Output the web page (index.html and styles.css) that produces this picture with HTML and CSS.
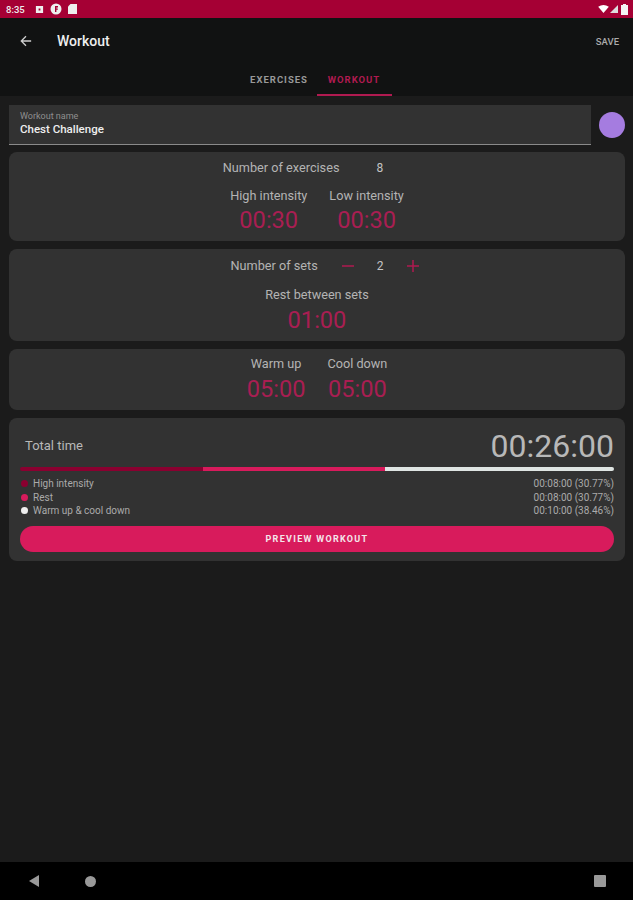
FILE: index.html
```html
<!DOCTYPE html>
<html>

<head>
    <link rel="stylesheet" href="styles.css">
</head>

<body>
    <div class="screen">
        <div class="status-bar">
            <div class="status-left">
                <span class="clock">8:35</span>
                <svg class="notif-box" width="9" height="9" viewBox="0 0 10 10"><path fill="#eee" fill-rule="evenodd" d="M1 1h8v8H1z M4 4v2h2V4z"/></svg>
                <svg class="notif-f" width="12" height="12" viewBox="0 0 12 12"><circle cx="6" cy="6" r="5.500" fill="#eee"/><path fill="#a50034" d="M5 3h3v1.400H6.400v1h1.400v1.400H6.400V9H5z"/></svg>
                <svg class="notif-card" width="9" height="10" viewBox="0 0 9 10"><path fill="#eee" d="M2.500 0H9v10H0V2.500z"/></svg>
            </div>
            <div class="status-right">
                <svg width="11" height="8" viewBox="0 0 12 9"><path fill="#fff" d="M0 2Q6-2 12 2L6 9z"/></svg>
                <svg width="8" height="8" viewBox="0 0 9 9"><path fill="#ddd" d="M9 0V9H0z"/></svg>
                <svg class="battery" width="7" height="11" viewBox="0 0 7 11"><path fill="#f4f4f4" d="M2 0h3v1h2v10H0V1h2z"/></svg>
            </div>
        </div>

        <div class="app-bar">
            <div class="toolbar">
                <svg class="back" width="12" height="12" viewBox="0 0 14 14"><path fill="none" stroke="#cfcfcf" stroke-width="1.500" d="M13 7H2 M7 1.500 1.500 7 7 12.500"/></svg>
                <span class="toolbar-title">Workout</span>
                <span class="save">SAVE</span>
            </div>
            <div class="tabs">
                <div class="tab">EXERCISES</div>
                <div class="tab tab-active">WORKOUT</div>
            </div>
        </div>

        <div class="content">
            <div class="name-row">
                <div class="name-field">
                    <div class="name-label">Workout name</div>
                    <div class="name-value">Chest Challenge</div>
                </div>
                <div class="color-dot"></div>
            </div>

            <div class="card card-intervals">
                <div class="line">
                    <span class="label">Number of exercises</span>
                    <span class="count count-exercises">8</span>
                </div>
                <div class="timers">
                    <div class="timer">
                        <div class="label">High intensity</div>
                        <div class="time">00:30</div>
                    </div>
                    <div class="timer">
                        <div class="label">Low intensity</div>
                        <div class="time">00:30</div>
                    </div>
                </div>
            </div>

            <div class="card card-sets">
                <div class="line line-sets">
                    <span class="label">Number of sets</span>
                    <svg class="stepper-minus" width="14" height="14" viewBox="0 0 14 14"><path stroke="#b01a50" stroke-width="1.500" d="M1 7h12"/></svg>
                    <span class="count count-sets">2</span>
                    <svg width="14" height="14" viewBox="0 0 14 14"><path stroke="#b01a50" stroke-width="1.500" d="M1 7h12 M7 1v12"/></svg>
                </div>
                <div class="timers">
                    <div class="timer">
                        <div class="label">Rest between sets</div>
                        <div class="time">01:00</div>
                    </div>
                </div>
            </div>

            <div class="card card-warm">
                <div class="timers">
                    <div class="timer">
                        <div class="label">Warm up</div>
                        <div class="time">05:00</div>
                    </div>
                    <div class="timer">
                        <div class="label">Cool down</div>
                        <div class="time">05:00</div>
                    </div>
                </div>
            </div>

            <div class="card card-total">
                <div class="total-head">
                    <span class="total-label">Total time</span>
                    <span class="total-time">00:26:00</span>
                </div>
                <div class="bar">
                    <div class="bar-part bar-high"></div>
                    <div class="bar-part bar-rest"></div>
                    <div class="bar-part bar-warm"></div>
                </div>
                <div class="legend">
                    <div class="legend-row"><span class="legend-dot dot-high"></span><span class="legend-name">High intensity</span><span>00:08:00 (30.77%)</span></div>
                    <div class="legend-row"><span class="legend-dot dot-rest"></span><span class="legend-name">Rest</span><span>00:08:00 (30.77%)</span></div>
                    <div class="legend-row"><span class="legend-dot dot-warm"></span><span class="legend-name">Warm up &amp; cool down</span><span>00:10:00 (38.46%)</span></div>
                </div>
                <button class="preview">PREVIEW WORKOUT</button>
            </div>
        </div>

        <div class="nav-bar">
            <svg class="nav-back" width="12" height="14" viewBox="0 0 12 14"><path fill="#999" d="M11 1V13L1 7z"/></svg>
            <div class="nav-home"></div>
            <div class="nav-recent"></div>
        </div>
    </div>
</body>

</html>
```

FILE: styles.css
```css
body {
    font-family: Roboto, "Liberation Sans", sans-serif;
    margin: 0;
    padding: 0;
    background-color: #1b1b1b;
}

.screen {
    width: 633px;
    height: 900px;
    display: flex;
    flex-direction: column;
    overflow: hidden;
}

.status-bar {
    height: 18px;
    background-color: #a50034;
    display: flex;
    align-items: center;
    justify-content: space-between;
    padding: 0 5px 0 6px;
    box-sizing: border-box;
}

.status-left,
.status-right {
    display: flex;
    align-items: center;
}

.status-right {
    gap: 1px;
}

.clock {
    color: #eee;
    font-size: 9.500px;
    font-weight: 500;
}

.notif-box {
    margin-left: 10px;
}

.notif-f {
    margin-left: 6px;
}

.notif-card {
    margin-left: 6px;
}

.battery {
    margin-left: 2px;
}

.app-bar {
    height: 78px;
    background-color: #111212;
    display: flex;
    flex-direction: column;
}

.toolbar {
    height: 46px;
    display: flex;
    align-items: center;
    padding: 0 14px 0 20px;
}

.back {
    margin-right: 25px;
}

.toolbar-title {
    color: #eee;
    font-size: 14px;
    font-weight: 500;
    flex: 1;
}

.save {
    color: #aaa;
    font-size: 9.500px;
    font-weight: 500;
}

.tabs {
    height: 32px;
    display: flex;
    justify-content: center;
}

.tab {
    width: 75px;
    text-align: center;
    color: #999;
    font-size: 9.500px;
    font-weight: 700;
    letter-spacing: 1px;
    line-height: 31px;
    box-sizing: border-box;
}

.tab-active {
    color: #b01a50;
    border-bottom: 2px solid #b01a50;
}

.content {
    flex: 1;
    padding: 9px 8px 0 9px;
    display: flex;
    flex-direction: column;
    gap: 8px;
}

.name-row {
    display: flex;
    align-items: center;
    gap: 8px;
    margin-bottom: -1px;
}

.name-field {
    flex: 1;
    height: 40px;
    background-color: #323232;
    border-bottom: 1px solid #8a8a8a;
    box-sizing: border-box;
    padding: 6px 11px 0;
}

.name-label {
    color: #8f8f8f;
    font-size: 9px;
    line-height: 10px;
}

.name-value {
    color: #eee;
    font-size: 11.500px;
    font-weight: 500;
    line-height: 16px;
}

.color-dot {
    width: 26px;
    height: 26px;
    border-radius: 50%;
    background-color: #a57ce0;
}

.card {
    background-color: #323232;
    border-radius: 8px;
    box-sizing: border-box;
}

.card-intervals {
    height: 89px;
    padding-top: 8px;
}

.card-sets {
    height: 92px;
    padding-top: 9px;
}

.card-warm {
    height: 61px;
    padding-top: 7px;
}

.card-total {
    height: 143px;
    padding: 12px 11px 0;
}

.line {
    display: flex;
    justify-content: center;
    align-items: center;
    height: 15px;
}

.line-sets {
    padding-left: 16px;
}

.label {
    color: #b4b4b4;
    font-size: 12.700px;
    line-height: 15px;
}

.count {
    color: #c4c4c4;
    font-size: 12px;
}

.count-exercises {
    margin-left: 37px;
    margin-right: 28px;
}

.count-sets {
    margin: 0 22px;
}

.stepper-minus {
    margin-left: 23px;
}

.timers {
    display: flex;
    justify-content: center;
    gap: 22px;
    margin-top: 13px;
}

.card-sets .timers {
    margin-top: 14px;
}

.card-warm .timers {
    margin-top: 0;
}

.timer {
    text-align: center;
}

.time {
    color: #a91e52;
    font-size: 23.600px;
    line-height: 27px;
    margin-top: 5px;
}

.card-intervals .time {
    margin-top: 4px;
}

.total-head {
    display: flex;
    justify-content: space-between;
    align-items: center;
    height: 32px;
    padding-left: 5px;
}

.total-label {
    color: #b8b8b8;
    font-size: 13px;
    margin-bottom: 2px;
}

.total-time {
    color: #b8b8b8;
    font-size: 32px;
}

.bar {
    display: flex;
    height: 4px;
    margin-top: 5px;
    border-radius: 2px;
    overflow: hidden;
}

.bar-part {
    height: 100%;
}

.bar-high {
    width: 30.800%;
    background-color: #8a0030;
}

.bar-rest {
    width: 30.700%;
    background-color: #d81b5c;
}

.bar-warm {
    width: 38.500%;
    background-color: #dfe5e3;
}

.legend {
    margin-top: 6px;
}

.legend-row {
    display: flex;
    align-items: center;
    height: 13.500px;
    color: #aaa;
    font-size: 10px;
}

.legend-name {
    flex: 1;
}

.legend-dot {
    width: 7px;
    height: 7px;
    border-radius: 50%;
    margin: 0 5px 0 1px;
}

.dot-high {
    background-color: #8a0030;
}

.dot-rest {
    background-color: #d81b5c;
}

.dot-warm {
    background-color: #eeeeee;
}

.preview {
    display: block;
    width: 100%;
    height: 26px;
    margin-top: 8px;
    padding: 0;
    border: none;
    border-radius: 13px;
    background-color: #d81b5c;
    color: #f4e6ea;
    font-family: Roboto, "Liberation Sans", sans-serif;
    font-size: 9px;
    font-weight: 700;
    letter-spacing: 1.300px;
}

.nav-bar {
    height: 38px;
    background-color: #000;
    display: flex;
    align-items: center;
    padding: 0 27px 0 28px;
}

.nav-home {
    width: 11px;
    height: 11px;
    margin-left: 45px;
    border-radius: 50%;
    background-color: #999;
}

.nav-recent {
    width: 12px;
    height: 12px;
    margin-left: auto;
    border-radius: 1px;
    background-color: #999;
}
```
